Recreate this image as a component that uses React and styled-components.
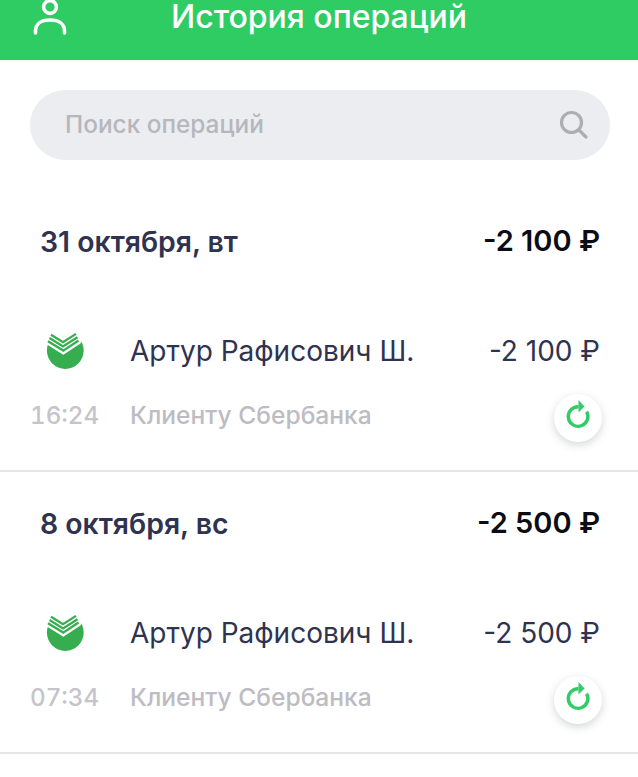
import React from 'react';
import styled, { createGlobalStyle } from 'styled-components';

const operations = [
  { date: '31 октября, вт', total: '-2 100 ₽', name: 'Артур Рафисович Ш.', amount: '-2 100 ₽', time: '16:24', note: 'Клиенту Сбербанка' },
  { date: '8 октября, вс', total: '-2 500 ₽', name: 'Артур Рафисович Ш.', amount: '-2 500 ₽', time: '07:34', note: 'Клиенту Сбербанка' }
];

function UserIcon() {
  return (
    <svg width="34" height="36" viewBox="0 0 34 36" fill="none" stroke="#fff" strokeWidth="3.6" strokeLinecap="round">
      <circle cx="17" cy="7" r="6.4" />
      <path d="M2.5 33 V31 C2.5 24 8 20 17 20 C26 20 31.5 24 31.5 31 V33" />
    </svg>
  );
}

function SearchIcon() {
  return (
    <svg width="30" height="30" viewBox="0 0 30 30" fill="none" stroke="#aeaeb0" strokeWidth="3.2" strokeLinecap="round">
      <circle cx="12.5" cy="12.5" r="10" />
      <path d="M20 20 L27 27" />
    </svg>
  );
}

function BankLogo() {
  return (
    <svg width="40" height="38" viewBox="0 0 40 38">
      <circle cx="20.3" cy="18.5" r="18.4" fill="#36ae4f" />
      <polygon points="0,11.2 18.3,22.8 35.5,11.5 40,-1 0,-1" fill="#fff" />
      <g fill="none" stroke="#36ae4f" strokeWidth="2.3">
        <path d="M3 9.3 L18.3 18.6 L33.5 8.5" />
        <path d="M4.5 6 L18 14.4 L32.5 5.3" />
        <path d="M6 2.7 L18 10.2 L31 1.9" />
      </g>
    </svg>
  );
}

function RepeatIcon() {
  return (
    <svg width="28" height="36" viewBox="0 0 28 36" fill="none">
      <path d="M22.6 11.6 A9.8 9.8 0 1 1 14.5 6.7" stroke="#2fcc68" strokeWidth="3.4" />
      <path d="M14.5 0 L20.5 6.4 L14.5 12.5 Z" fill="#2fcc68" />
    </svg>
  );
}

export default function App() {
  return (
    <Page>
      <GlobalStyle />
      <Header>
        <UserIcon />
        <Title>История операций</Title>
      </Header>
      <SearchWrap>
        <SearchBar>
          <Placeholder>Поиск операций</Placeholder>
          <SearchIcon />
        </SearchBar>
      </SearchWrap>
      {operations.map(op => (
        <Group key={op.date}>
          <DateRow>
            <DateLabel>{op.date}</DateLabel>
            <Total>{op.total}</Total>
          </DateRow>
          <MainRow>
            <LogoCell><BankLogo /></LogoCell>
            <Name>{op.name}</Name>
            <Amount>{op.amount}</Amount>
          </MainRow>
          <SubRow>
            <Time>{op.time}</Time>
            <Note>{op.note}</Note>
            <RepeatButton><RepeatIcon /></RepeatButton>
          </SubRow>
        </Group>
      ))}
    </Page>
  );
}

const GlobalStyle = createGlobalStyle`
  html, body {
    margin: 0;
    padding: 0;
    background: #fff;
  }
  * {
    box-sizing: border-box;
  }
`;

const Page = styled.div`
  width: 638px;
  height: 777px;
  overflow: hidden;
  background: #fff;
  font-family: Inter, "Noto Sans", sans-serif;
`;

const Header = styled.header`
  height: 60px;
  background: #2fcb63;
  position: relative;
  display: flex;
  justify-content: center;

  svg {
    position: absolute;
    left: 33px;
    top: 0;
  }
`;

const Title = styled.h1`
  margin: 0;
  height: 34px;
  line-height: 34px;
  font-size: 32px;
  font-weight: 500;
  color: #fff;
`;

const SearchWrap = styled.div`
  padding: 30px 28px 30px 30px;
`;

const SearchBar = styled.div`
  height: 70px;
  border-radius: 35px;
  background: #ecedf0;
  display: flex;
  align-items: center;
  justify-content: space-between;
  padding: 0 21px 0 35px;
`;

const Placeholder = styled.span`
  margin-top: -2px;
  font-size: 24.4px;
  font-weight: 500;
  color: #b6b6bd;
`;

const Group = styled.section`
  height: 282px;
  padding: 32px 38px 0 30px;
  border-bottom: 2px solid #e6e6e8;
`;

const DateRow = styled.div`
  height: 40px;
  display: flex;
  justify-content: space-between;
  align-items: center;
  padding-left: 10px;
`;

const DateLabel = styled.span`
  margin-top: -2px;
  font-size: 28.4px;
  font-weight: 600;
  color: #2f3350;
`;

const Total = styled.span`
  font-size: 29px;
  font-weight: 600;
  color: #0c0c14;
  margin-top: -4px;
`;

const MainRow = styled.div`
  margin-top: 69px;
  height: 40px;
  display: flex;
  align-items: center;
`;

const LogoCell = styled.div`
  width: 100px;
  padding-left: 15px;
  display: flex;
  align-items: center;
`;

const Name = styled.span`
  flex: 1;
  font-size: 28px;
  color: #2f3350;
`;

const Amount = styled.span`
  font-size: 28px;
  color: #2f3350;
`;

const SubRow = styled.div`
  margin-top: 23px;
  height: 48px;
  display: flex;
  align-items: center;
`;

const Time = styled.span`
  width: 100px;
  margin-top: -6px;
  font-size: 24.2px;
  font-weight: 500;
  font-variant-numeric: tabular-nums;
  color: #c4c4ca;
`;

const Note = styled.span`
  flex: 1;
  margin-top: -6px;
  font-size: 24.6px;
  font-weight: 500;
  color: #bcbcc2;
`;

const RepeatButton = styled.button`
  width: 48px;
  height: 48px;
  margin-right: -2px;
  padding: 0;
  border: none;
  border-radius: 50%;
  background: #fff;
  box-shadow: 0 3px 9px rgba(60, 80, 70, 0.22);
  display: flex;
  align-items: center;
  justify-content: center;
`;
